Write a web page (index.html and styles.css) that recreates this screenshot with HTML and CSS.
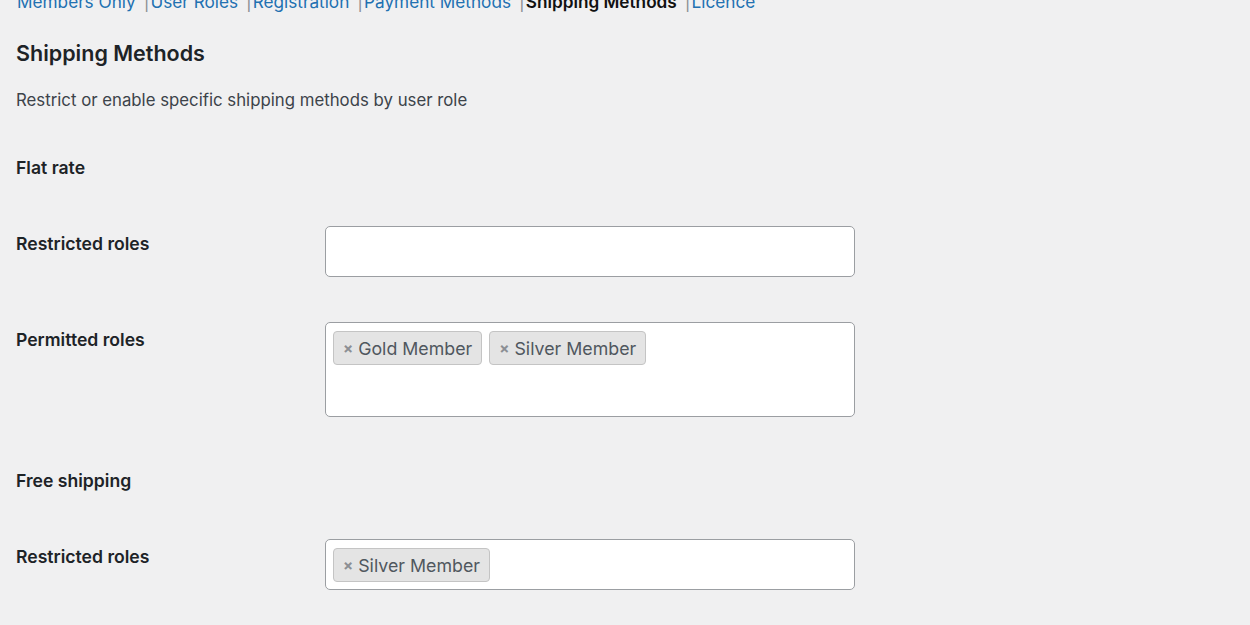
FILE: index.html
```html
<!DOCTYPE html>
<html lang="en">
<head>
<meta charset="utf-8">
<title>Shipping Methods</title>
<link rel="stylesheet" href="styles.css">
</head>
<body>
<ul class="subnav">
  <li><a href="#">Members Only</a><span class="sep">|</span></li>
  <li><a href="#">User Roles</a><span class="sep">|</span></li>
  <li><a href="#">Registration</a><span class="sep">|</span></li>
  <li><a href="#">Payment Methods</a><span class="sep">|</span></li>
  <li><a href="#" class="current">Shipping Methods</a><span class="sep">|</span></li>
  <li><a href="#">Licence</a></li>
</ul>
<h2 class="page-title">Shipping Methods</h2>
<p class="desc">Restrict or enable specific shipping methods by user role</p>

<h3 class="method-title first">Flat rate</h3>
<div class="rows">
  <div class="row">
    <div class="label">Restricted roles</div>
    <div class="field"></div>
  </div>
  <div class="row">
    <div class="label">Permitted roles</div>
    <div class="field tall">
      <span class="tag"><span class="x">×</span>Gold Member</span>
      <span class="tag"><span class="x">×</span>Silver Member</span>
    </div>
  </div>
</div>

<h3 class="method-title">Free shipping</h3>
<div class="rows">
  <div class="row">
    <div class="label">Restricted roles</div>
    <div class="field">
      <span class="tag"><span class="x">×</span>Silver Member</span>
    </div>
  </div>
</div>
</body>
</html>
```
FILE: styles.css
```css
html, body {
  margin: 0;
  padding: 0;
  background: #f0f0f1;
}
body {
  padding-left: 16px;
  font-family: Inter, "Liberation Sans", sans-serif;
  color: #1d2327;
}
.subnav {
  list-style: none;
  margin: -8px 0 0 1px;
  padding: 0;
  display: flex;
  font-size: 17.2px;
  line-height: 20px;
}
.subnav a {
  color: #2271b1;
  text-decoration: none;
}
.subnav a.current {
  color: #111;
  font-weight: 600;
}
.subnav .sep {
  color: #8c8f94;
  margin: 0 0 0 8px;
}
.subnav .sep {
  padding-right: 1px;
}
.page-title {
  margin: 28px 0 0;
  font-size: 21.5px;
  line-height: 26px;
  font-weight: 600;
}
.desc {
  margin: 23px 0 0;
  font-size: 16.8px;
  line-height: 22px;
  color: #3c434a;
}
.method-title {
  margin: 0;
  font-size: 17.6px;
  line-height: 22px;
  font-weight: 600;
}
.method-title.first {
  margin-top: 46px;
}
.rows {
  display: flex;
  flex-direction: column;
  gap: 45px;
  margin-top: 47px;
}
.rows + .method-title {
  margin-top: 53px;
}
.row {
  display: flex;
  align-items: flex-start;
}
.label {
  width: 309px;
  padding-top: 7px;
  font-size: 17.6px;
  line-height: 22px;
  font-weight: 600;
}
.field {
  box-sizing: border-box;
  width: 530px;
  min-height: 51px;
  background: #fff;
  border: 1px solid #9b9ea2;
  border-radius: 5px;
  padding: 8px 7px 0;
  display: flex;
  flex-wrap: wrap;
  align-items: flex-start;
  gap: 7px;
}
.field.tall {
  min-height: 95px;
}
.tag {
  box-sizing: border-box;
  height: 34px;
  display: inline-flex;
  align-items: center;
  padding: 0 9px 0 9px;
  background: #e4e4e4;
  border: 1px solid #c4c4c4;
  border-radius: 4px;
  font-size: 17.8px;
  color: #50575e;
}
.tag .x {
  color: #8c8f94;
  font-size: 15px;
  font-weight: 700;
  margin-right: 5px;
}
```
